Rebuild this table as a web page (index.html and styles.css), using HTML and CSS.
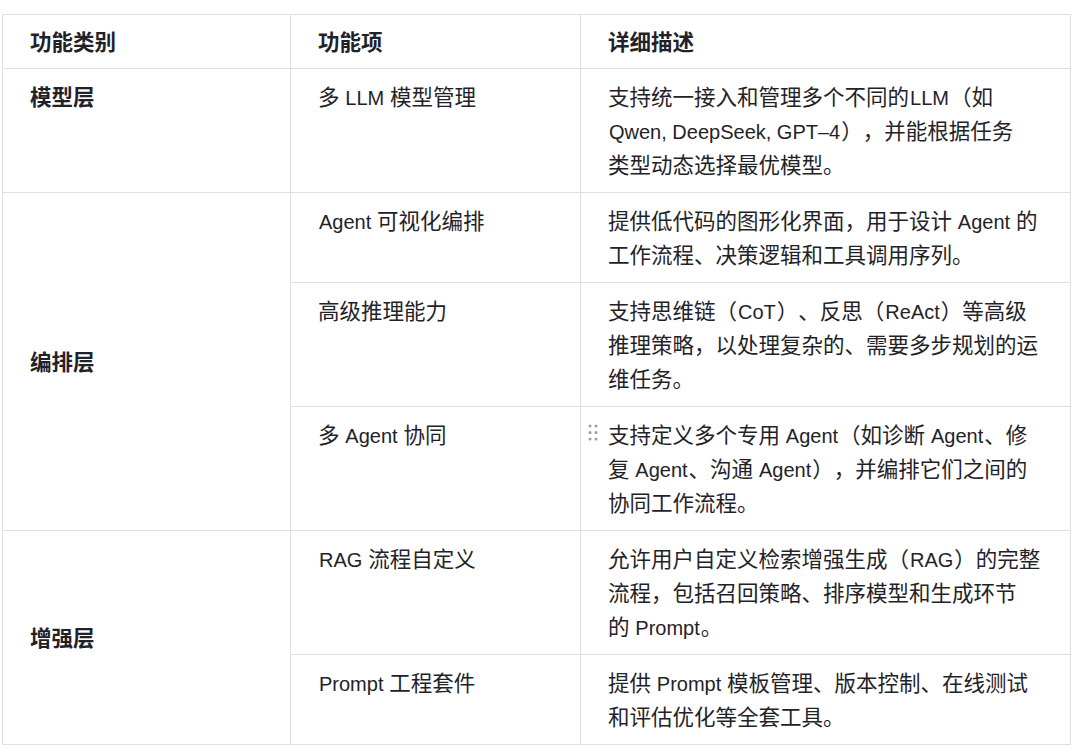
FILE: index.html
```html
<!DOCTYPE html>
<html lang="zh-CN">
<head>
<meta charset="utf-8">
<link rel="stylesheet" href="styles.css">
</head>
<body>
<table class="feature-table">
  <colgroup>
    <col class="c1"><col class="c2"><col class="c3">
  </colgroup>
  <thead>
    <tr><th>功能类别</th><th>功能项</th><th>详细描述</th></tr>
  </thead>
  <tbody>
    <tr>
      <td class="cat">模型层</td>
      <td>多 <span class="en">LLM</span> 模型管理</td>
      <td>支持统一接入和管理多个不同的<span class="en">LLM</span>（如<br><span class="en">Qwen, DeepSeek, GPT–4</span>），并能根据任务<br>类型动态选择最优模型。</td>
    </tr>
    <tr>
      <td class="cat mid" rowspan="3">编排层</td>
      <td><span class="en">Agent</span> 可视化编排</td>
      <td>提供低代码的图形化界面，用于设计 <span class="en">Agent</span> 的<br>工作流程、决策逻辑和工具调用序列。</td>
    </tr>
    <tr>
      <td>高级推理能力</td>
      <td>支持思维链（<span class="en">CoT</span>）、反思（<span class="en">ReAct</span>）等高级<br>推理策略，以处理复杂的、需要多步规划的运<br>维任务。</td>
    </tr>
    <tr>
      <td>多 <span class="en">Agent</span> 协同</td>
      <td class="has-handle"><span class="handle"><svg width="10" height="17" viewBox="0 0 10 17"><g fill="#9aa0a8"><circle cx="2" cy="2" r="1.5"/><circle cx="8" cy="2" r="1.5"/><circle cx="2" cy="8.5" r="1.5"/><circle cx="8" cy="8.5" r="1.5"/><circle cx="2" cy="15" r="1.5"/><circle cx="8" cy="15" r="1.5"/></g></svg></span>支持定义多个专用 <span class="en">Agent</span>（如诊断 <span class="en">Agent</span>、修<br>复 <span class="en">Agent</span>、沟通 <span class="en">Agent</span>），并编排它们之间的<br>协同工作流程。</td>
    </tr>
    <tr>
      <td class="cat mid" rowspan="2">增强层</td>
      <td><span class="en">RAG</span> 流程自定义</td>
      <td>允许用户自定义检索增强生成（<span class="en">RAG</span>）的完整<br>流程，包括召回策略、排序模型和生成环节<br>的 <span class="en">Prompt</span>。</td>
    </tr>
    <tr>
      <td><span class="en">Prompt</span> 工程套件</td>
      <td>提供 <span class="en">Prompt</span> 模板管理、版本控制、在线测试<br>和评估优化等全套工具。</td>
    </tr>
  </tbody>
</table>
</body>
</html>
```

FILE: styles.css
```css
html, body {
  margin: 0;
  background: #ffffff;
}
body {
  padding: 14px 0 0 2px;
  font-family: "Noto Sans CJK SC", "Liberation Sans", sans-serif;
  color: #1f2329;
}
.feature-table {
  border-collapse: collapse;
  table-layout: fixed;
  width: 1068px;
  font-size: 21.5px;
  line-height: 34px;
  text-spacing-trim: space-all;
}
.en {
  font-family: "Liberation Sans", "Noto Sans CJK SC", sans-serif;
  font-size: 20px;
  line-height: 1;
  margin: 0 1px;
}
.c1 { width: 288px; }
.c2 { width: 290px; }
.c3 { width: 490px; }
.feature-table th,
.feature-table td {
  border: 1px solid #dedfe1;
  padding: 9.5px 6px 11.5px 27px;
  text-align: left;
  vertical-align: top;
  white-space: nowrap;
}
.feature-table th {
  font-weight: 700;
  padding-top: 8.5px;
  padding-bottom: 10.5px;
}
.cat {
  font-weight: 700;
}
.mid {
  vertical-align: middle !important;
}
.has-handle {
  position: relative;
}
.handle {
  position: absolute;
  left: 7px;
  top: 17px;
  width: 10px;
  height: 17px;
  display: block;
}
.handle svg { display: block; }
```
